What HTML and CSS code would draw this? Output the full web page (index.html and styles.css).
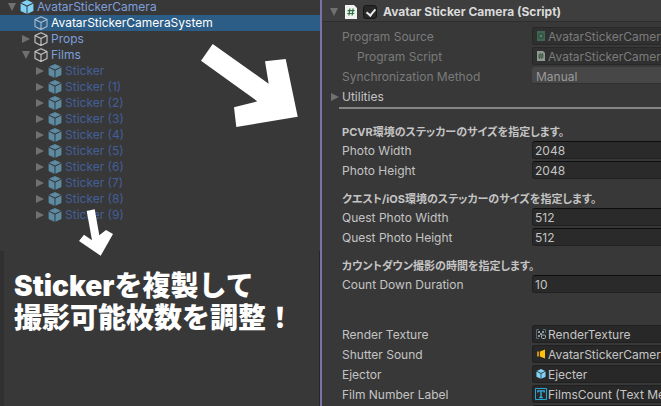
FILE: index.html
```html
<!DOCTYPE html>
<html lang="ja">
<head>
    <meta charset="utf-8">
    <meta name="viewport" content="width=device-width, initial-scale=1.0">
    <title>Avatar Sticker Camera</title>
    <link rel="stylesheet" href="styles.css">
</head>
<body>
    <!-- Shared icons -->
    <svg class="defs" aria-hidden="true">
        <symbol id="cube" viewBox="0 0 14 14">
            <path d="M7 0 L12.9 2.7 L7 5.6 L1.1 2.7 Z M0.6 3.6 L6.5 6.5 V13.8 L0.6 11 Z M13.4 3.6 L7.5 6.5 V13.8 L13.4 11 Z" fill="currentColor"/>
        </symbol>
        <symbol id="cube-line" viewBox="0 0 14 14">
            <path d="M7 0.7 L13 3.5 V10.5 L7 13.4 L1 10.5 V3.5 Z M1 3.5 L7 6.6 L13 3.5 M7 6.6 V13.4" fill="none" stroke="currentColor" stroke-width="1.1" stroke-linejoin="round"/>
        </symbol>
        <symbol id="right" viewBox="0 0 8 8"><path d="M0 0 L8 4 L0 8 Z" fill="currentColor"/></symbol>
        <symbol id="down" viewBox="0 0 8 8"><path d="M0 0 H8 L4 8 Z" fill="currentColor"/></symbol>
    </svg>

    <main class="editor">
        <section class="left">
            <!-- Hierarchy -->
            <ul class="tree">
                <li class="row">
                    <button class="fold" aria-label="Collapse"><svg><use href="#down"/></svg></button>
                    <svg class="cube prefab"><use href="#cube"/></svg><span>AvatarStickerCamera</span>
                </li>
                <li class="row level-1 selected">
                    <i class="fold"></i>
                    <svg class="cube"><use href="#cube-line"/></svg><span>AvatarStickerCameraSystem</span>
                </li>
                <li class="row level-1">
                    <button class="fold" aria-label="Expand"><svg><use href="#right"/></svg></button>
                    <svg class="cube"><use href="#cube-line"/></svg><span>Props</span>
                </li>
                <li class="row level-1">
                    <button class="fold" aria-label="Collapse"><svg><use href="#down"/></svg></button>
                    <svg class="cube"><use href="#cube-line"/></svg><span>Films</span>
                </li>
                <li class="row level-2 inactive">
                    <button class="fold" aria-label="Expand"><svg><use href="#right"/></svg></button>
                    <svg class="cube prefab"><use href="#cube"/></svg><span>Sticker</span>
                </li>
                <li class="row level-2 inactive">
                    <button class="fold" aria-label="Expand"><svg><use href="#right"/></svg></button>
                    <svg class="cube prefab"><use href="#cube"/></svg><span>Sticker (1)</span>
                </li>
                <li class="row level-2 inactive">
                    <button class="fold" aria-label="Expand"><svg><use href="#right"/></svg></button>
                    <svg class="cube prefab"><use href="#cube"/></svg><span>Sticker (2)</span>
                </li>
                <li class="row level-2 inactive">
                    <button class="fold" aria-label="Expand"><svg><use href="#right"/></svg></button>
                    <svg class="cube prefab"><use href="#cube"/></svg><span>Sticker (3)</span>
                </li>
                <li class="row level-2 inactive">
                    <button class="fold" aria-label="Expand"><svg><use href="#right"/></svg></button>
                    <svg class="cube prefab"><use href="#cube"/></svg><span>Sticker (4)</span>
                </li>
                <li class="row level-2 inactive">
                    <button class="fold" aria-label="Expand"><svg><use href="#right"/></svg></button>
                    <svg class="cube prefab"><use href="#cube"/></svg><span>Sticker (5)</span>
                </li>
                <li class="row level-2 inactive">
                    <button class="fold" aria-label="Expand"><svg><use href="#right"/></svg></button>
                    <svg class="cube prefab"><use href="#cube"/></svg><span>Sticker (6)</span>
                </li>
                <li class="row level-2 inactive">
                    <button class="fold" aria-label="Expand"><svg><use href="#right"/></svg></button>
                    <svg class="cube prefab"><use href="#cube"/></svg><span>Sticker (7)</span>
                </li>
                <li class="row level-2 inactive">
                    <button class="fold" aria-label="Expand"><svg><use href="#right"/></svg></button>
                    <svg class="cube prefab"><use href="#cube"/></svg><span>Sticker (8)</span>
                </li>
                <li class="row level-2 inactive">
                    <button class="fold" aria-label="Expand"><svg><use href="#right"/></svg></button>
                    <svg class="cube prefab"><use href="#cube"/></svg><span>Sticker (9)</span>
                </li>
            </ul>
            <div class="note">
                <p>Stickerを複製して<br>撮影可能枚数を調整！</p>
            </div>

            <!-- Arrows drawn over the hierarchy -->
            <svg class="arrows" viewBox="0 0 320 260" aria-hidden="true">
                <path d="M212.7 44 L201 60.7 L257.3 101.3 L234 107.3 L236.3 127 L297.7 116.7 L285.7 59 L265 61.3 L268.7 83.7 Z"/>
                <path d="M86.7 211 L94.7 209.3 L99.3 235.3 L106 230 L113 234 L100.7 255.7 L79 241 L84 234.7 L92 240.3 Z"/>
            </svg>
        </section>

        <!-- Inspector -->
        <form class="inspector">
            <header class="title">
                <button type="button" class="fold" aria-label="Collapse"><svg><use href="#down"/></svg></button>
                <svg class="script" viewBox="0 0 12 14">
                    <path d="M0 0 H9 L12 3 V14 H0 Z" fill="#f0f3ee"/>
                    <path d="M4.9 3.5 L3.9 10.5 M8.1 3.5 L7.1 10.5 M2.6 5.6 H9.6 M2.3 8.5 H9.3" stroke="#2c7040" stroke-width="1.2"/>
                </svg>
                <input type="checkbox" id="enabled" checked>
                <label for="enabled">Avatar Sticker Camera (Script)</label>
            </header>

            <div class="props">
                <div class="prop off">
                    <label for="source">Program Source</label>
                    <div class="field">
                        <svg viewBox="0 0 12 12"><path d="M2 1 H10 V11 H2 Z" fill="#3f6653"/><circle cx="6" cy="6" r="2.5" fill="none" stroke="#2c4a3b"/><circle cx="6" cy="6" r="1" fill="#5a8a70"/></svg>
                        <input id="source" value="AvatarStickerCamera" disabled>
                    </div>
                </div>
                <div class="prop off">
                    <label for="script" class="sub">Program Script</label>
                    <div class="field">
                        <svg viewBox="0 0 12 12"><path d="M2 1 H8 L10 3 V11 H2 Z" fill="#919791"/><path d="M5.2 3 L4.6 9 M7.4 3 L6.8 9 M3.3 5 H8.7 M3.2 7 H8.6" stroke="#3b5944"/></svg>
                        <input id="script" value="AvatarStickerCamera" disabled>
                    </div>
                </div>
                <div class="prop off">
                    <label for="sync">Synchronization Method</label>
                    <select id="sync" disabled><option>Manual</option></select>
                </div>
                <div class="prop utilities">
                    <button type="button" class="fold" aria-label="Expand"><svg><use href="#right"/></svg></button>
                    <span>Utilities</span>
                </div>
                <hr>

                <h2>PCVR環境のステッカーのサイズを指定します。</h2>
                <div class="prop">
                    <label for="pw">Photo Width</label>
                    <div class="field number"><input id="pw" value="2048"></div>
                </div>
                <div class="prop">
                    <label for="ph">Photo Height</label>
                    <div class="field number"><input id="ph" value="2048"></div>
                </div>

                <h2>クエスト/iOS環境のステッカーのサイズを指定します。</h2>
                <div class="prop">
                    <label for="qw">Quest Photo Width</label>
                    <div class="field number"><input id="qw" value="512"></div>
                </div>
                <div class="prop">
                    <label for="qh">Quest Photo Height</label>
                    <div class="field number"><input id="qh" value="512"></div>
                </div>

                <h2>カウントダウン撮影の時間を指定します。</h2>
                <div class="prop">
                    <label for="count">Count Down Duration</label>
                    <div class="field number"><input id="count" value="10"></div>
                </div>

                <div class="refs">
                    <div class="prop">
                        <label for="render">Render Texture</label>
                        <div class="field">
                            <svg viewBox="0 0 12 12"><path d="M4 1.5 H1.5 V10.5 H4 M8 1.5 H10.5 V5" fill="none" stroke="#566a74"/><path d="M3 3 H5 V5 H3 Z M7 3 H9 V5 H7 Z M5 5 H7 V7 H5 Z M3 7 H5 V9 H3 Z" fill="#8d9ca2"/><rect x="6.5" y="7" width="4" height="3.5" rx="1" fill="#282828" stroke="#a8b0b3"/></svg>
                            <input id="render" value="RenderTexture" readonly>
                        </div>
                    </div>
                    <div class="prop">
                        <label for="sound">Shutter Sound</label>
                        <div class="field">
                            <svg viewBox="0 0 12 12"><path d="M2 3.5 H4.2 V8.5 H2 Z" fill="#c98f12"/><path d="M5 3.5 L10 1.5 V10.5 L5 8.5 Z" fill="#fcc00d"/></svg>
                            <input id="sound" value="AvatarStickerCamera" readonly>
                        </div>
                    </div>
                    <div class="prop">
                        <label for="ejector">Ejector</label>
                        <div class="field">
                            <svg class="prefab" viewBox="0 0 12 12"><use href="#cube" x="1" y="1" width="10" height="10"/></svg>
                            <input id="ejector" value="Ejecter" readonly>
                        </div>
                    </div>
                    <div class="prop">
                        <label for="film">Film Number Label</label>
                        <div class="field">
                            <svg viewBox="0 0 12 12"><path d="M0.5 0.5 H11.5 V11.5 H0.5 Z" fill="none" stroke="#25a7d8"/><path d="M2.8 4.5 V2.8 H9.2 V4.5 M6 2.8 V9.5 M4.3 9.5 H7.7" fill="none" stroke="#35b5e5" stroke-width="1.3"/></svg>
                            <input id="film" value="FilmsCount (Text Mesh Pro)" readonly>
                        </div>
                    </div>
                    <div class="prop">
                        <span></span>
                        <div class="field"></div>
                    </div>
                </div>
            </div>
        </form>
    </main>
</body>
</html>
```

FILE: styles.css
```css
* {
    box-sizing: border-box;
}
body {
    margin: 0;
    background: #383838;
    color: #c4c4c4;
    font-family: Inter, "Noto Sans CJK JP", sans-serif;
    font-size: 12px;
    overflow: hidden;
}
button, input, select {
    font: inherit;
    color: inherit;
    margin: 0;
    padding: 0;
    border: 0;
    background: none;
}
.defs {
    display: none;
}
.editor {
    display: grid;
    grid-template-columns: 320fr 341fr;
    height: 100vh;
}

/* Hierarchy */
.left {
    position: relative;
    display: flex;
    flex-direction: column;
    min-width: 0;
}
.tree {
    list-style: none;
    margin: -1px 0 0;
    padding: 0 0 28px;
    color: #7d9fdc;
}
.row {
    display: flex;
    align-items: center;
    height: 16px;
    padding-left: 6px;
    line-height: 16px;
    white-space: nowrap;
}
.level-1 {
    padding-left: 20px;
}
.level-2 {
    padding-left: 34px;
}
.fold {
    display: flex;
    flex: none;
    align-items: center;
    justify-content: center;
    width: 11px;
    height: 16px;
    color: #707070;
}
.fold svg {
    width: 8px;
    height: 8px;
}
.cube {
    width: 14px;
    height: 14px;
    margin: 0 3px 0 3px;
    color: #c8c8c8;
}
.prefab {
    color: #7fd2f5;
}
.selected {
    background: #2c5d87;
    color: #fff;
}
.selected .cube {
    color: #a9bccb;
}
.inactive {
    color: #435f9a;
}
.inactive .cube {
    color: #5c8ba3;
}
.note {
    flex: 1;
    padding: 19px 0 0 10px;
    border-left: 4px solid #303030;
    border-right: 1px solid #262626;
}
.note p {
    margin: 0;
    color: #fff;
    font-size: 28px;
    font-weight: 900;
    line-height: 32px;
    white-space: nowrap;
}
.arrows {
    position: absolute;
    top: 0;
    left: 0;
    width: 100%;
    fill: #fff;
}

/* Inspector */
.inspector {
    min-width: 0;
    border-left: 2px solid #7b72a8;
}
.title {
    display: flex;
    align-items: center;
    height: 22px;
    padding: 2px 0 0 6px;
    margin-bottom: 5px;
    border-bottom: 1px solid #2e2e2e;
    background: #3e3e3e;
    color: #dadada;
    font-weight: 700;
    white-space: nowrap;
}
.script {
    width: 12px;
    height: 14px;
    margin: 0 6px 0 6px;
}
.title input {
    appearance: none;
    width: 14px;
    height: 14px;
    margin-right: 6px;
    border: 1px solid #171717;
    border-radius: 3px;
    background: #282828;
}
.title input:checked::after {
    content: "";
    display: block;
    width: 4px;
    height: 7px;
    margin: 1px 4px;
    border: solid #e8e8e8;
    border-width: 0 2px 2px 0;
    transform: rotate(40deg);
}
.props {
    padding-left: 20px;
}
.prop {
    display: grid;
    grid-template-columns: 190px 1fr;
    height: 20px;
    line-height: 19px;
    white-space: nowrap;
}
.off {
    color: #7b7b7b;
}
.sub {
    padding-left: 15px;
}
.field {
    display: flex;
    align-items: center;
    height: 18px;
    min-width: 0;
    padding-left: 2px;
    border: 1px solid #202020;
    border-right: 0;
    border-radius: 3px 0 0 3px;
    background: #282828;
    overflow: hidden;
}
.number {
    background: #2a2a2a;
    border-top-color: #0d0d0d;
}
.off .field {
    background: #303030;
    border-color: #282828;
}
.field svg {
    flex: none;
    width: 12px;
    height: 12px;
    margin-right: 1px;
}
.field input {
    flex: 1;
    min-width: 0;
    height: 16px;
    outline: none;
}
.prop select {
    appearance: none;
    height: 17px;
    padding-left: 4px;
    border-bottom: 1px solid #303030;
    border-radius: 3px 0 0 3px;
    background: #474747;
    color: #9a9a9a;
    opacity: 1;
}
.utilities {
    display: flex;
    margin-left: -13px;
    gap: 2px;
}
.utilities .fold {
    height: 20px;
}
hr {
    height: 2px;
    margin: 0 0 0 -3px;
    border: 0;
    background: #858585;
}
h2 {
    height: 27px;
    margin: 0;
    padding-top: 8px;
    font-size: 11px;
    font-weight: 700;
    font-feature-settings: "palt";
    line-height: 20px;
    white-space: nowrap;
}
hr + h2 {
    height: 32px;
    padding-top: 13px;
}
.refs {
    margin-top: 30px;
}
```
